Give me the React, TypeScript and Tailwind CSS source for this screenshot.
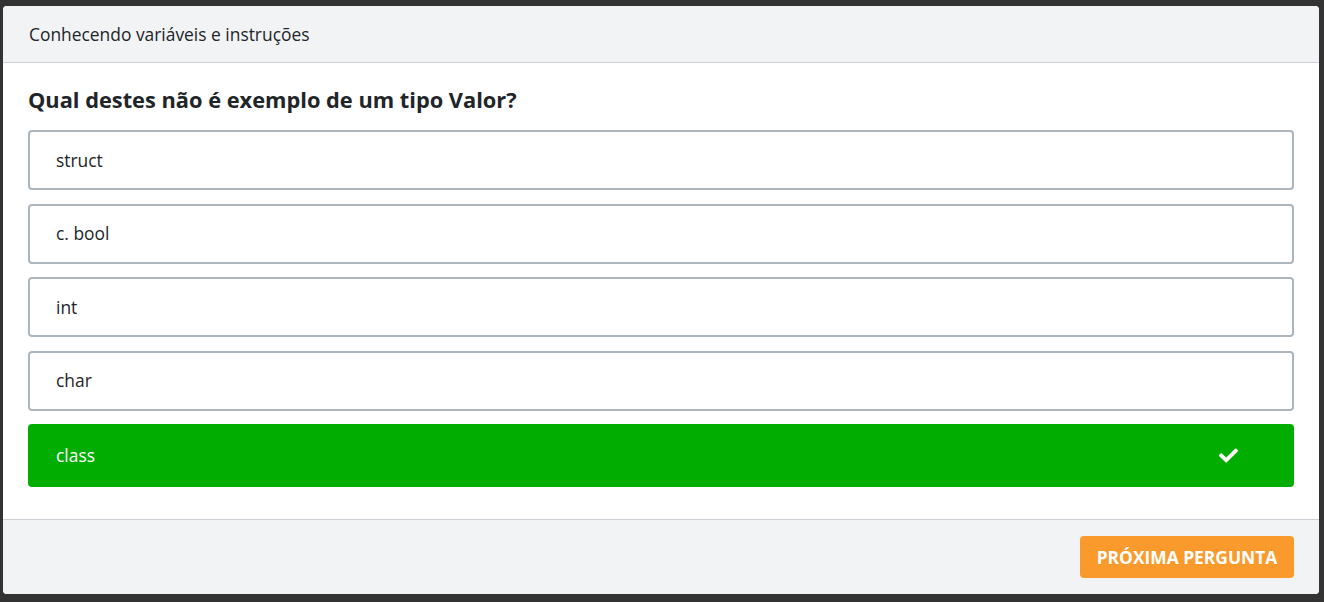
import React from "react";
import { FaCheck } from "react-icons/fa";

const options = ["struct", "c. bool", "int", "char"];

export default function App() {
  return (
    <div
      className="w-[1324px] h-[602px] bg-[#333333] pt-[6px] pl-[3px] pr-[5px] pb-[8px]"
      style={{ fontFamily: '"Open Sans", "Noto Sans", sans-serif' }}
    >
      <div className="h-full bg-white rounded-[4px] overflow-hidden flex flex-col">
        <div className="h-[57px] shrink-0 bg-[#f2f3f5] border-b border-[#cdd0d4] flex items-center px-[26px]">
          <span className="text-[17.4px] text-[#212529]">Conhecendo variáveis e instruções</span>
        </div>
        <div className="flex-1 px-[25px] pt-[22px]">
          <h2 className="text-[21.8px] leading-[30px] font-bold text-[#212529] mb-[15px]">
            Qual destes não é exemplo de um tipo Valor?
          </h2>
          <div className="flex flex-col gap-[13.5px]">
            {options.map((o) => (
              <div
                key={o}
                className="h-[60px] border-2 border-[#adb5bd] rounded-[4px] flex items-center pl-[26px] text-[17.4px] text-[#212529]"
              >
                {o}
              </div>
            ))}
            <div className="h-[63px] bg-[#00ad00] rounded-[4px] flex items-center justify-between pl-[28px] pr-[56px] text-[17.4px] text-white">
              <span>class</span>
              <FaCheck className="w-[19px] h-[19px] text-white" />
            </div>
          </div>
        </div>
        <div className="h-[75px] shrink-0 bg-[#f2f3f5] border-t border-[#cdd0d4] flex justify-end items-start pt-[16px] pr-[25px]">
          <button className="h-[42px] w-[214px] bg-[#fa9a2c] rounded-[4px] text-white font-bold text-[17.4px] uppercase">
            Próxima pergunta
          </button>
        </div>
      </div>
    </div>
  );
}
